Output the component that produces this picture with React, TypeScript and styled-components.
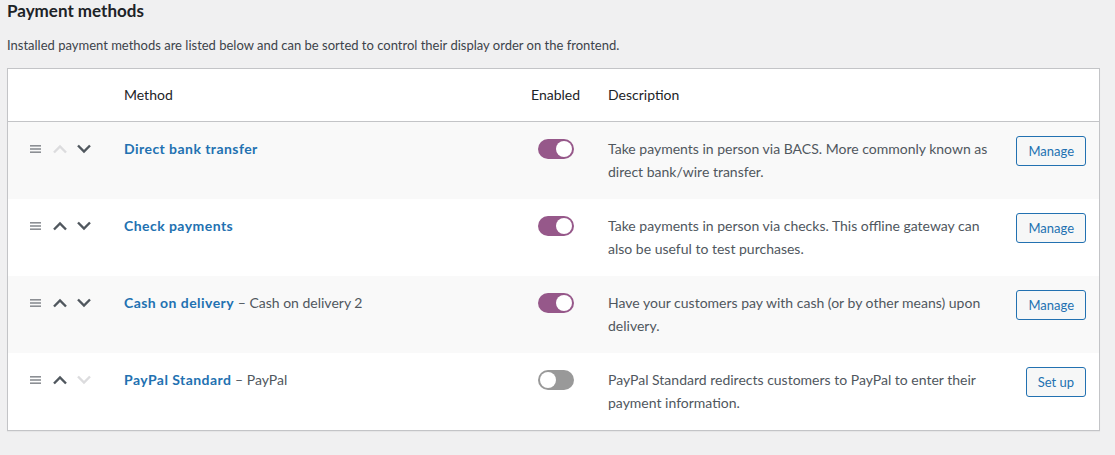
import React from 'react';
import styled, { createGlobalStyle } from 'styled-components';

const FONT = `"Lato", "Noto Sans", sans-serif`;

const GlobalStyle = createGlobalStyle`
  html, body { margin: 0; padding: 0; background: #f0f0f1; }
  body { font-family: ${FONT}; color: #3c434a; -webkit-font-smoothing: antialiased; }
  * { box-sizing: border-box; }
`;

const Page = styled.div`
  padding: 0 15px 24px 7px;
`;

const Heading = styled.h2`
  margin: 0;
  padding-top: 0;
  font-size: 17px;
  line-height: 21px;
  font-weight: 700;
  color: #1d2327;
`;

const Intro = styled.p`
  margin: 14px 0 13px;
  font-size: 13px;
  line-height: 20px;
  color: #3c434a;
`;

const Table = styled.div`
  background: #fff;
  border: 1px solid #c3c4c7;
  box-shadow: 0 1px 1px rgba(0, 0, 0, 0.04);
`;

const Cols = `102px 407px 77px 407px 1fr`;

const HeaderRow = styled.div`
  display: grid;
  grid-template-columns: ${Cols};
  border-bottom: 1px solid #c3c4c7;
  background: #fff;
`;

const HeaderCell = styled.div<{ $center?: boolean }>`
  padding: 14px 14px 15px;
  font-size: 14px;
  line-height: 23px;
  color: #1d2327;
  text-align: ${(p) => (p.$center ? 'center' : 'left')};
`;

const Row = styled.div<{ $alt: boolean }>`
  display: grid;
  grid-template-columns: ${Cols};
  background: ${(p) => (p.$alt ? '#f9f9f9' : '#fff')};
  padding: 15px 0 16px;
`;

const SortCell = styled.div`
  display: flex;
  align-items: center;
  height: 23px;
  padding-left: 22px;
`;

const HandleIcon = styled.svg`
  width: 11px;
  height: 10px;
  margin-right: 11px;
`;

const Chevron = styled.svg<{ $disabled?: boolean }>`
  width: 16px;
  height: 10px;
  margin-right: 8px;
  color: ${(p) => (p.$disabled ? '#dcdcde' : '#50575e')};
`;

const MethodCell = styled.div`
  padding: 0 14px;
  font-size: 14px;
  line-height: 23px;
  color: #50575e;
`;

const MethodLink = styled.a`
  color: #2271b1;
  font-weight: 700;
  letter-spacing: 0.45px;
  text-decoration: none;
`;

const EnabledCell = styled.div`
  display: flex;
  justify-content: center;
  padding-top: 2px;
`;

const Toggle = styled.span<{ $on: boolean }>`
  position: relative;
  display: inline-block;
  width: 36px;
  height: 20px;
  border-radius: 10px;
  background: ${(p) => (p.$on ? '#96588a' : '#999999')};
  &::after {
    content: '';
    position: absolute;
    top: 2px;
    left: ${(p) => (p.$on ? '18px' : '2px')};
    width: 16px;
    height: 16px;
    border-radius: 50%;
    background: #fff;
  }
`;

const DescCell = styled.div`
  padding: 0 10px 0 14px;
  font-size: 14px;
  line-height: 23px;
  color: #50575e;
`;

const ActionCell = styled.div`
  display: flex;
  justify-content: flex-end;
  padding-right: 13px;
`;

const Button = styled.button`
  margin-top: -1px;
  height: 30px;
  padding: 0 11px;
  border: 1px solid #2271b1;
  border-radius: 3px;
  background: #f6f7f7;
  color: #2271b1;
  font-family: ${FONT};
  font-size: 13px;
  line-height: 28px;
  cursor: pointer;
`;

type Gateway = {
  title: string;
  sub?: string;
  enabled: boolean;
  desc: string;
  upDisabled?: boolean;
  downDisabled?: boolean;
  action: string;
};

const gateways: Gateway[] = [
  {
    title: 'Direct bank transfer',
    enabled: true,
    desc: 'Take payments in person via BACS. More commonly known as direct bank/wire transfer.',
    upDisabled: true,
    action: 'Manage',
  },
  {
    title: 'Check payments',
    enabled: true,
    desc: 'Take payments in person via checks. This offline gateway can also be useful to test purchases.',
    action: 'Manage',
  },
  {
    title: 'Cash on delivery',
    sub: 'Cash on delivery 2',
    enabled: true,
    desc: 'Have your customers pay with cash (or by other means) upon delivery.',
    action: 'Manage',
  },
  {
    title: 'PayPal Standard',
    sub: 'PayPal',
    enabled: false,
    desc: 'PayPal Standard redirects customers to PayPal to enter their payment information.',
    downDisabled: true,
    action: 'Set up',
  },
];

const Handle = () => (
  <HandleIcon viewBox="0 0 11 10">
    <rect x="0" y="1" width="11" height="1.6" fill="#8c8f94" />
    <rect x="0" y="4.2" width="11" height="1.6" fill="#8c8f94" />
    <rect x="0" y="7.4" width="11" height="1.6" fill="#8c8f94" />
  </HandleIcon>
);

const Up = ({ disabled }: { disabled?: boolean }) => (
  <Chevron $disabled={disabled} viewBox="0 0 16 10">
    <path d="M2 8.5 L8 2.5 L14 8.5" fill="none" stroke="currentColor" strokeWidth="2.4" />
  </Chevron>
);

const Down = ({ disabled }: { disabled?: boolean }) => (
  <Chevron $disabled={disabled} viewBox="0 0 16 10">
    <path d="M2 1.5 L8 7.5 L14 1.5" fill="none" stroke="currentColor" strokeWidth="2.4" />
  </Chevron>
);

export default function App() {
  return (
    <>
      <GlobalStyle />
      <Page>
        <Heading>Payment methods</Heading>
        <Intro>
          Installed payment methods are listed below and can be sorted to control their display order on the frontend.
        </Intro>
        <Table>
          <HeaderRow>
            <HeaderCell />
            <HeaderCell>Method</HeaderCell>
            <HeaderCell $center>Enabled</HeaderCell>
            <HeaderCell>Description</HeaderCell>
            <HeaderCell />
          </HeaderRow>
          {gateways.map((g, i) => (
            <Row key={g.title} $alt={i % 2 === 0}>
              <SortCell>
                <Handle />
                <Up disabled={g.upDisabled} />
                <Down disabled={g.downDisabled} />
              </SortCell>
              <MethodCell>
                <MethodLink href="#">{g.title}</MethodLink>
                {g.sub ? <> – {g.sub}</> : null}
              </MethodCell>
              <EnabledCell>
                <Toggle $on={g.enabled} />
              </EnabledCell>
              <DescCell>{g.desc}</DescCell>
              <ActionCell>
                <Button>{g.action}</Button>
              </ActionCell>
            </Row>
          ))}
        </Table>
      </Page>
    </>
  );
}
